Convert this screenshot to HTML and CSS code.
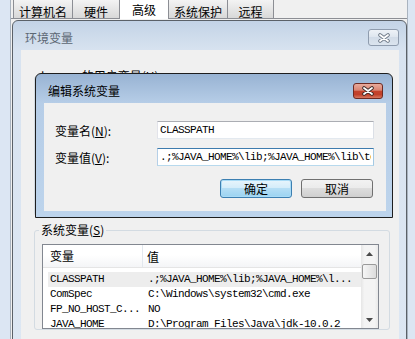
FILE: index.html
```html
<!DOCTYPE html>
<html lang="zh-CN">
  <head>
    <meta charset="UTF-8" />
    <title>编辑系统变量</title>
    <link rel="stylesheet" href="styles.css">
  </head>
  <body>
    <!-- System Properties window behind -->
    <div class="sysprop">
      <div class="frame-left"></div>
      <div class="sysprop-body">
        <div class="tabs">
          <div class="tab">计算机名</div>
          <div class="tab">硬件</div>
          <div class="tab active">高级</div>
          <div class="tab">系统保护</div>
          <div class="tab">远程</div>
        </div>
        <div class="tab-page"></div>
      </div>
      <div class="frame-right"></div>
    </div>

    <!-- Environment Variables window (inactive) -->
    <div class="window env-window">
      <div class="titlebar">
        <span class="title">环境变量</span>
        <button type="button" class="close-btn">
          <svg width="14" height="10" viewBox="0 0 14 10">
            <path d="M3 2 L11 8 M11 2 L3 8" stroke="#6f7a88" stroke-width="3.6" stroke-linecap="round" />
            <path d="M3 2 L11 8 M11 2 L3 8" stroke="#ffffff" stroke-width="1.8" stroke-linecap="round" />
          </svg>
        </button>
      </div>
      <div class="client env-client">
        <fieldset class="group user-group">
          <legend>lenovo 的用户变量(<u>U</u>)</legend>
          <div class="user-space"></div>
        </fieldset>
        <fieldset class="group sys-group">
          <legend>系统变量(<u>S</u>)</legend>
          <div class="listview">
            <div class="list-main">
              <div class="list-header">
                <div class="col-name">变量</div>
                <div class="col-value">值</div>
              </div>
              <div class="list-rows">
                <div class="list-row selected">
                  <div class="col-name">CLASSPATH</div>
                  <div class="col-value">.;%JAVA_HOME%\lib;%JAVA_HOME%\l...</div>
                </div>
                <div class="list-row">
                  <div class="col-name">ComSpec</div>
                  <div class="col-value">C:\Windows\system32\cmd.exe</div>
                </div>
                <div class="list-row">
                  <div class="col-name">FP_NO_HOST_C...</div>
                  <div class="col-value">NO</div>
                </div>
                <div class="list-row">
                  <div class="col-name">JAVA_HOME</div>
                  <div class="col-value">D:\Program Files\Java\jdk-10.0.2</div>
                </div>
              </div>
            </div>
            <div class="scrollbar">
              <div class="sb-arrow">
                <svg width="7" height="4" viewBox="0 0 7 4"><path d="M0 4 L3.5 0 L7 4 Z" fill="#4a4a4a" /></svg>
              </div>
              <div class="sb-track"><div class="sb-thumb"></div></div>
              <div class="sb-arrow">
                <svg width="7" height="4" viewBox="0 0 7 4"><path d="M0 0 L3.5 4 L7 0 Z" fill="#4a4a4a" /></svg>
              </div>
            </div>
          </div>
        </fieldset>
      </div>
    </div>

    <!-- Edit System Variable dialog (active) -->
    <div class="window edit-window">
      <div class="titlebar">
        <span class="title">编辑系统变量</span>
        <button type="button" class="close-btn close-red">
          <svg width="14" height="10" viewBox="0 0 14 10">
            <path d="M3 2 L11 8 M11 2 L3 8" stroke="#3a2a28" stroke-width="3.6" stroke-linecap="round" />
            <path d="M3 2 L11 8 M11 2 L3 8" stroke="#ffffff" stroke-width="1.8" stroke-linecap="round" />
          </svg>
        </button>
      </div>
      <div class="client edit-client">
        <div class="form-grid">
          <label for="var-name">变量名(<u>N</u>):</label>
          <input type="text" id="var-name" class="field" value="CLASSPATH" />
          <label for="var-value">变量值(<u>V</u>):</label>
          <input type="text" id="var-value" class="field focused" value=".;%JAVA_HOME%\lib;%JAVA_HOME%\lib\tools.jar" />
        </div>
        <div class="dialog-buttons">
          <button type="button" class="btn btn-default">确定</button>
          <button type="button" class="btn">取消</button>
        </div>
      </div>
    </div>
  </body>
</html>
```

FILE: styles.css
```css
body {
  margin: 0;
  width: 415px;
  height: 339px;
  overflow: hidden;
  position: relative;
  background-color: #f0f0f0;
  font-family: "Noto Sans CJK SC", sans-serif;
  font-size: 12px;
  color: #000000;
}
u {
  text-decoration: underline;
}

/* system properties window */
.sysprop {
  display: flex;
  height: 339px;
}
.frame-left {
  width: 10px;
  background-color: #dce6f3;
  border-right: 1px solid #a9b3bf;
}
.frame-right {
  width: 7px;
  background-color: #dce6f3;
  border-left: 1px solid #a9b3bf;
}
.sysprop-body {
  flex: 1;
  display: flex;
  flex-direction: column;
}
.tabs {
  display: flex;
  align-items: flex-end;
  height: 18px;
  padding-left: 2px;
  position: relative;
  z-index: 1;
}
.tab {
  height: 18px;
  box-sizing: border-box;
  min-width: 47px;
  padding: 5px 5px 0;
  line-height: 13px;
  text-align: center;
  border-left: 1px solid #8c8e94;
  background: linear-gradient(#f3f3f3, #e6e6e6 50%, #d8d8d8);
}
.tab:last-child {
  border-right: 1px solid #8c8e94;
}
.tab.active {
  height: 21px;
  min-width: 49px;
  margin-bottom: -1px;
  padding-top: 5px;
  background: #ffffff;
}
.tab-page {
  flex: 1;
  border-top: 1px solid #8c8e94;
}

/* windows */
.window {
  position: absolute;
  box-sizing: border-box;
  display: flex;
  flex-direction: column;
  border: 1px solid #5b6168;
  border-radius: 6px 6px 0 0;
}
.titlebar {
  flex: none;
  height: 29px;
  box-sizing: border-box;
  padding: 4px 0 0 4px;
  display: flex;
  align-items: center;
  justify-content: space-between;
}
.client {
  flex: 1;
  background-color: #f0f0f0;
}
.close-btn {
  width: 31px;
  height: 17px;
  padding: 0;
  display: flex;
  align-items: center;
  justify-content: center;
  border: 1px solid #8f9cae;
  border-radius: 3px;
  background: linear-gradient(#eef2f7, #dde5ee 50%, #d2dce8 50%, #dbe4ee);
}

.env-window {
  left: 12px;
  top: 20px;
  width: 395px;
  height: 340px;
  padding: 0 7px 0 8px;
  background: linear-gradient(#c3d3e6, #d8e3f0 30px, #dde7f3);
}
.env-window .title {
  color: #5c6773;
}
.env-client {
  padding: 0 9px 0 13px;
}

.edit-window {
  left: 35px;
  top: 73px;
  width: 358px;
  height: 145px;
  padding: 0 6px 6px 8px;
  border-color: #1e1e1e;
  background: linear-gradient(#98b3d3, #b6cde7 29px, #bdd4ec);
}
.edit-window .close-btn {
  margin-right: 3px;
}
.close-red {
  width: 30px;
  height: 16px;
  border-color: #6e2a22;
  background: linear-gradient(#e9ab9c, #d98472 45%, #c4432c 50%, #c1402a 75%, #d6775f);
}
.edit-client {
  padding: 18px 11px 0;
}

/* group boxes */
.group {
  margin: 0;
  border: 1px solid #d3dbe2;
  border-radius: 3px;
  padding: 0 10px 0 7px;
}
.group legend {
  padding: 0 2px;
  margin-left: -3px;
  line-height: 14px;
}
.user-group {
  margin: 19px 0 7px;
}
.user-space {
  height: 132px;
}

/* list view */
.listview {
  margin-top: 7px;
  height: 85px;
  box-sizing: border-box;
  border: 1px solid #828790;
  background-color: #ffffff;
  display: flex;
}
.list-main {
  flex: 1;
  overflow: hidden;
}
.list-header {
  display: flex;
  height: 23px;
  box-sizing: border-box;
  align-items: center;
  background: linear-gradient(#ffffff, #ffffff 45%, #f4f5f7);
  border-bottom: 1px solid #e5e5e5;
}
.list-header .col-name {
  width: 100px;
  box-sizing: border-box;
  padding-left: 7px;
  border-right: 1px solid #e3e8ee;
  line-height: 22px;
}
.list-header .col-value {
  padding-left: 4px;
}
.list-rows {
  padding-top: 4px;
}
.list-row {
  display: flex;
  height: 15px;
  line-height: 15px;
  margin-left: 5px;
  white-space: nowrap;
  font-family: "Liberation Mono", monospace;
  font-size: 11px;
  letter-spacing: -0.6px;
}
.list-row .col-name {
  width: 95px;
  box-sizing: border-box;
  padding-left: 2px;
}
.list-row .col-value {
  padding-left: 5px;
}
.list-row.selected {
  background-color: #ededed;
}
.scrollbar {
  width: 17px;
  display: flex;
  flex-direction: column;
  background: linear-gradient(90deg, #e6e6e6, #f4f4f4 20%, #f4f4f4 80%, #e9e9e9);
}
.sb-arrow {
  height: 17px;
  display: flex;
  align-items: center;
  justify-content: center;
}
.sb-track {
  flex: 1;
  padding-top: 2px;
}
.sb-thumb {
  height: 15px;
  margin: 0 1px;
  box-sizing: border-box;
  border: 1px solid #9a9a9a;
  border-radius: 2px;
  background: linear-gradient(90deg, #f6f6f6, #e9e9e9 50%, #dcdcdc);
}

/* edit form */
.form-grid {
  display: grid;
  grid-template-columns: 102px 217px;
  row-gap: 9px;
  align-items: center;
}
.field {
  height: 18px;
  box-sizing: border-box;
  margin: 0;
  padding: 0 2px;
  border: 1px solid;
  border-color: #abadb3 #dbdfe6 #e3e9ef #e2e3ea;
  background-color: #ffffff;
  font-family: "Liberation Mono", monospace;
  font-size: 11px;
  letter-spacing: -0.6px;
  color: #000000;
  outline: none;
}
.field.focused {
  border-color: #3d7bad #a4c9e3 #b7d9ed #b5cfe7;
}
.dialog-buttons {
  display: flex;
  justify-content: flex-end;
  gap: 9px;
  margin-top: 13px;
  padding-right: 2px;
}
.btn {
  width: 72px;
  height: 19px;
  box-sizing: border-box;
  padding: 0;
  border: 1px solid #707070;
  border-radius: 3px;
  font-family: "Noto Sans CJK SC", sans-serif;
  font-size: 12px;
  line-height: 17px;
  color: #000000;
  background: linear-gradient(#f2f2f2, #ebebeb 50%, #dddddd 50%, #cfcfcf);
}
.btn-default {
  border-color: #3c7fb1;
  box-shadow: inset 0 0 0 1px #a9dbf6;
  background: linear-gradient(#e8f5fc, #d3ecfa 50%, #b5def5 50%, #9bd3f1);
}
```
